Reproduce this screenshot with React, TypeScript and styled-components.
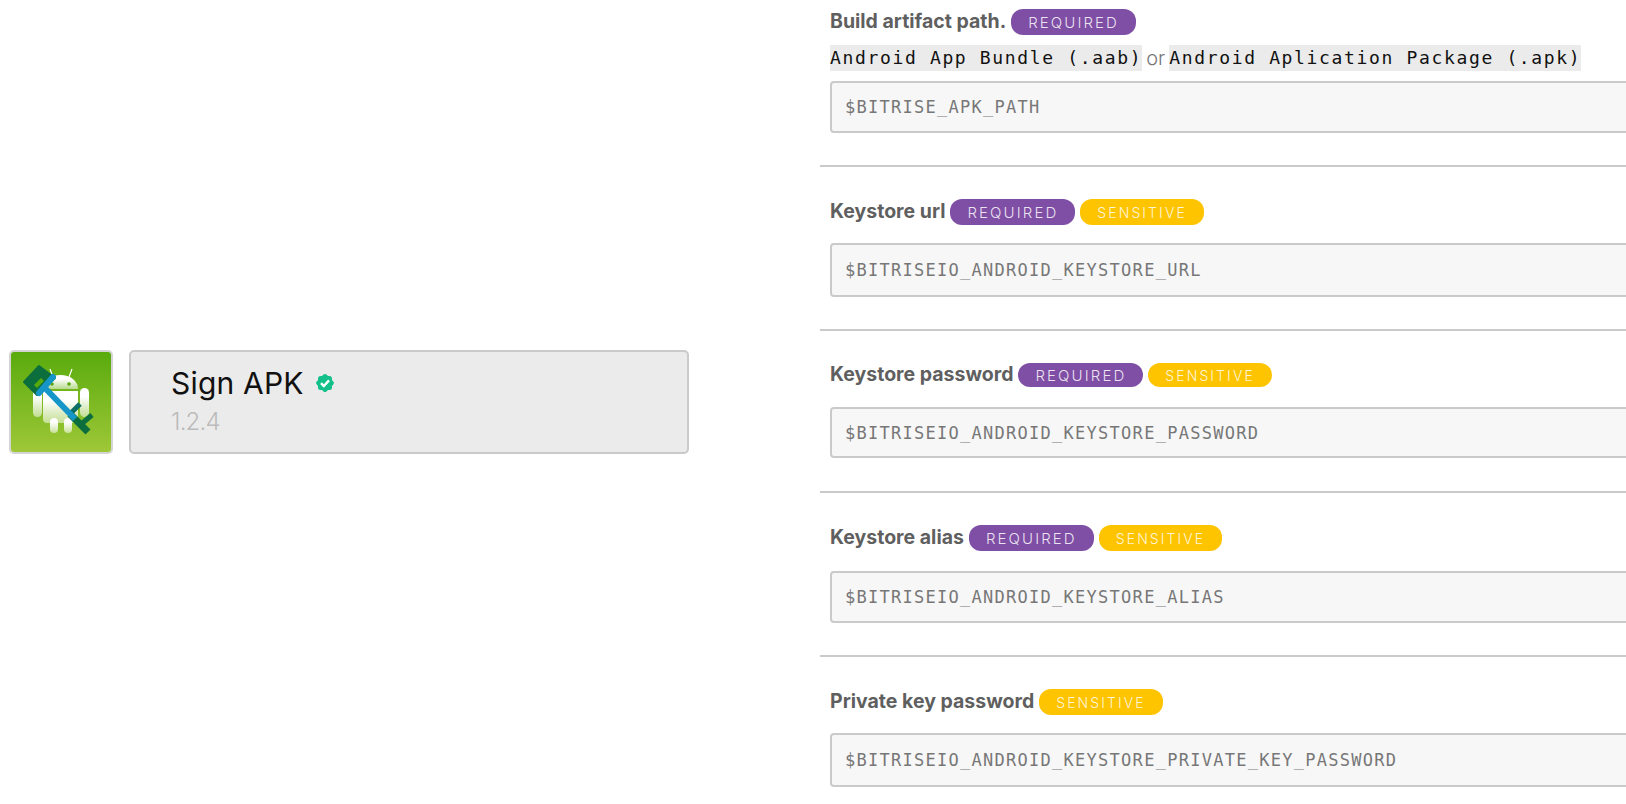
import React from 'react';
import styled, { createGlobalStyle } from 'styled-components';

const GlobalStyle = createGlobalStyle`
  html, body {
    margin: 0;
    padding: 0;
    background: #fff;
    overflow: hidden;
  }
`;

const Page = styled.div`
  width: 1626px;
  height: 804px;
  overflow: hidden;
  display: grid;
  grid-template-columns: 820px 1fr;
  font-family: 'Inter', 'Liberation Sans', sans-serif;
`;

const StepColumn = styled.div`
  display: flex;
  align-items: center;
  gap: 16px;
  padding: 0 131px 0 9px;
  box-sizing: border-box;
  height: 804px;
`;

const StepIcon = styled.div`
  width: 104px;
  height: 104px;
  flex: none;
  box-sizing: border-box;
  border: 2px solid #d4d4d4;
  border-radius: 5px;
  overflow: hidden;
  svg { display: block; }
`;

const StepCard = styled.div`
  flex: 1;
  height: 104px;
  box-sizing: border-box;
  background: #ebebeb;
  border: 2px solid #cacaca;
  border-radius: 5px;
  padding: 12px 0 0 40px;
`;

const TitleRow = styled.div`
  display: flex;
  align-items: center;
  gap: 11px;
  height: 38px;
`;

const Title = styled.span`
  font-size: 30px;
  font-weight: 400;
  letter-spacing: 0.2px;
  color: #111;
`;

const Version = styled.div`
  margin-top: 5px;
  font-size: 24px;
  font-weight: 300;
  letter-spacing: -0.8px;
  color: #bbb;
`;

const InputsColumn = styled.div`
  min-width: 0;
`;

const Section = styled.section<{ $height: number }>`
  height: ${(p) => p.$height}px;
  box-sizing: border-box;
  padding: 0 0 0 10px;
  border-bottom: 2px solid #cacaca;
  display: flex;
  flex-direction: column;
  &:last-child { border-bottom: 0; }
`;

const LabelRow = styled.div<{ $top: number; $height: number }>`
  display: flex;
  align-items: center;
  gap: 5px;
  height: ${(p) => p.$height}px;
  margin-top: ${(p) => p.$top}px;
`;

const Label = styled.span`
  margin-bottom: 3px;
  font-size: 19.5px;
  font-weight: 700;
  color: #5f5f5f;
`;

const Badge = styled.span<{ $kind: 'required' | 'sensitive' }>`
  display: inline-flex;
  align-items: center;
  height: 100%;
  padding: 0 17px;
  border-radius: 12px;
  font-size: ${(p) => (p.$kind === 'required' ? '15px' : '14px')};
  font-weight: 300;
  letter-spacing: 2.1px;
  color: rgba(255, 255, 255, 0.85);
  background: ${(p) => (p.$kind === 'required' ? '#7f4fa6' : '#ffc400')};
`;

const DescRow = styled.div`
  display: flex;
  align-items: center;
  gap: 4px;
  height: 26px;
  margin-top: 10px;
`;

const Code = styled.code`
  height: 26px;
  line-height: 26px;
  background: #ebebeb;
  font-family: 'DejaVu Sans Mono', 'Liberation Mono', monospace;
  font-size: 18px;
  letter-spacing: 1.65px;
  color: #111;
`;

const Or = styled.span`
  font-size: 20px;
  font-weight: 300;
  color: #777;
`;

const Field = styled.div<{ $height: number; $top: number }>`
  width: 900px;
  height: ${(p) => p.$height}px;
  margin-top: ${(p) => p.$top}px;
  box-sizing: border-box;
  display: flex;
  align-items: center;
  padding-left: 13px;
  background: #f7f7f7;
  border: 2px solid #cacaca;
  border-radius: 4px;
  font-family: 'DejaVu Sans Mono', 'Liberation Mono', monospace;
  font-size: 17px;
  letter-spacing: 1.27px;
  color: #777;
`;

const KeyIcon = () => (
  <svg width="100" height="100" viewBox="2 2 100 100">
    <defs>
      <linearGradient id="bg" x1="0" y1="0" x2="0" y2="1">
        <stop offset="0" stopColor="#58aa0c" />
        <stop offset="1" stopColor="#a0c838" />
      </linearGradient>
      <linearGradient id="droid" x1="0" y1="0" x2="0" y2="1">
        <stop offset="0.3" stopColor="#ffffff" />
        <stop offset="1" stopColor="#ffffff" stopOpacity="0.5" />
      </linearGradient>
    </defs>
    <rect x="0" y="0" width="104" height="104" fill="url(#bg)" />
    <g fill="url(#droid)">
      <path d="M34 39a17.5 14 0 0 1 35 0z" />
      <path d="M34 41h35v28a4 4 0 0 1-4 4H38a4 4 0 0 1-4-4z" />
      <rect x="24" y="38" width="9" height="29" rx="4.5" />
      <rect x="71" y="38" width="9" height="29" rx="4.5" />
      <rect x="41" y="68" width="8" height="15" rx="4" />
      <rect x="55" y="68" width="8" height="15" rx="4" />
    </g>
    <path d="M44 27l-3-8M60 27l3-8" stroke="#fff" strokeWidth="1.2" />
    <circle cx="43" cy="34" r="1.8" fill="#58aa0c" />
    <circle cx="60" cy="34" r="1.8" fill="#58aa0c" />
    <path d="M15 32 L30 16 L46 28 L28 45 Z" fill="#0c6e3c" stroke="#0c6e3c" strokeWidth="2" strokeLinejoin="round" />
    <path d="M25 35 L32 28 L35 31 L28 38 Z" fill="#58aa0c" />
    <path d="M44 27 L30 43" stroke="#1696c8" strokeWidth="6" strokeLinecap="round" />
    <path d="M61 64 L79 82" stroke="#0c6e3c" strokeWidth="7" />
    <path d="M71 54 L60 65" stroke="#0d6e66" strokeWidth="5" />
    <path d="M83 65 L70 76" stroke="#0c6e3c" strokeWidth="5" />
    <path d="M34 36 L66 69" stroke="#1696c8" strokeWidth="6" />
  </svg>
);

const VerifiedBadge = () => (
  <svg width="20" height="20" viewBox="0 0 20 20">
    <g fill="#14c08a">
      <rect x="3" y="3" width="14" height="14" rx="2.5" />
      <rect x="3" y="3" width="14" height="14" rx="2.5" transform="rotate(45 10 10)" />
    </g>
    <path d="M6 10.2l2.8 2.8 5.2-5.6" fill="none" stroke="#fff" strokeWidth="2.4" />
  </svg>
);

const sections = [
  { label: 'Keystore url', badges: ['required', 'sensitive'], value: '$BITRISEIO_ANDROID_KEYSTORE_URL', h: 164, bh: 26, ft: 18, fh: 54 },
  { label: 'Keystore password', badges: ['required', 'sensitive'], value: '$BITRISEIO_ANDROID_KEYSTORE_PASSWORD', h: 162, bh: 24, ft: 20, fh: 51 },
  { label: 'Keystore alias', badges: ['required', 'sensitive'], value: '$BITRISEIO_ANDROID_KEYSTORE_ALIAS', h: 164, bh: 26, ft: 20, fh: 52 },
  { label: 'Private key password', badges: ['sensitive'], value: '$BITRISEIO_ANDROID_KEYSTORE_PRIVATE_KEY_PASSWORD', h: 147, bh: 26, ft: 18, fh: 54 },
] as const;

export default function App() {
  return (
    <Page>
      <GlobalStyle />
      <StepColumn>
        <StepIcon>
          <KeyIcon />
        </StepIcon>
        <StepCard>
          <TitleRow>
            <Title>Sign APK</Title>
            <VerifiedBadge />
          </TitleRow>
          <Version>1.2.4</Version>
        </StepCard>
      </StepColumn>
      <InputsColumn>
        <Section $height={167}>
          <LabelRow $top={9} $height={26}>
            <Label>Build artifact path.</Label>
            <Badge $kind="required">REQUIRED</Badge>
          </LabelRow>
          <DescRow>
            <Code>Android App Bundle (.aab)</Code>
            <Or>or</Or>
            <Code>Android Aplication Package (.apk)</Code>
          </DescRow>
          <Field $height={52} $top={10}>$BITRISE_APK_PATH</Field>
        </Section>
        {sections.map((s) => (
          <Section key={s.label} $height={s.h}>
            <LabelRow $top={32} $height={s.bh}>
              <Label>{s.label}</Label>
              {s.badges.map((b) => (
                <Badge key={b} $kind={b}>{b.toUpperCase()}</Badge>
              ))}
            </LabelRow>
            <Field $height={s.fh} $top={s.ft}>{s.value}</Field>
          </Section>
        ))}
      </InputsColumn>
    </Page>
  );
}
